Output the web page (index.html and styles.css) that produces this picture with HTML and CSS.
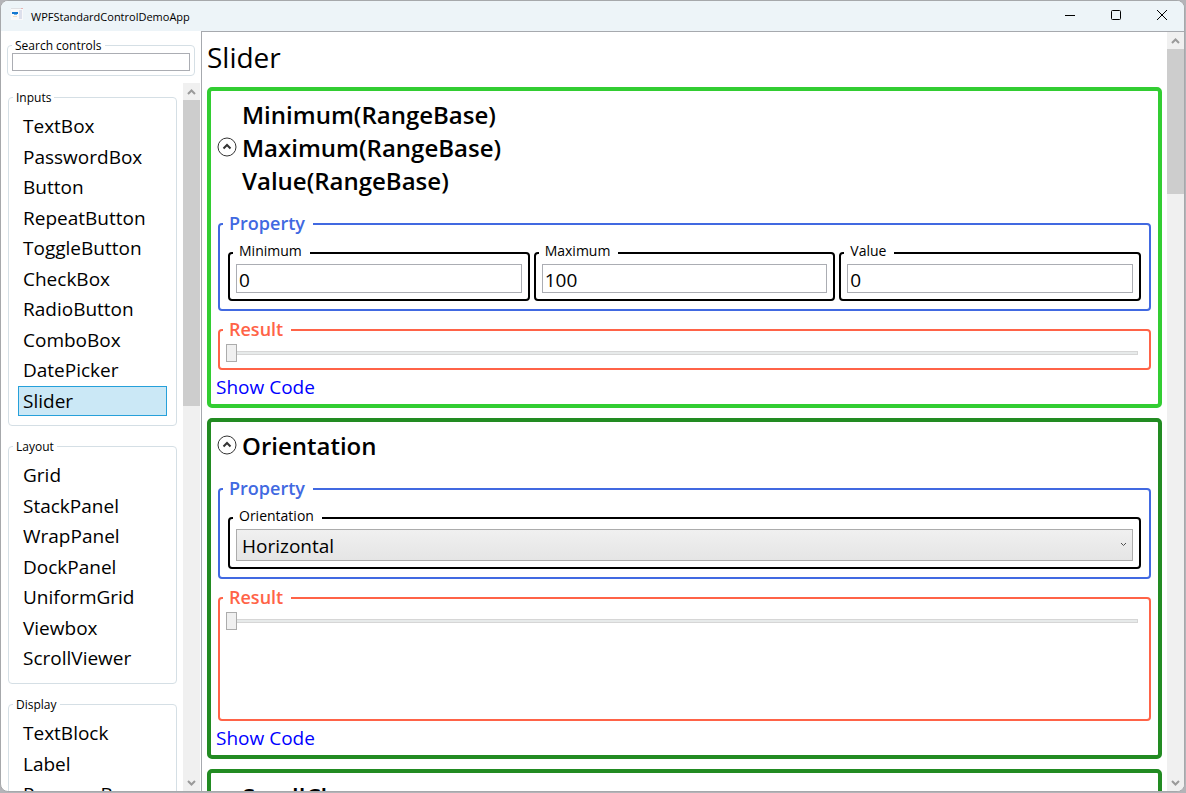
FILE: index.html
```html
<!DOCTYPE html>
<html lang="en">
  <head>
    <meta charset="utf-8">
    <title>WPFStandardControlDemoApp</title>
    <link rel="stylesheet" href="styles.css">
  </head>
  <body>
    <div class="window">
      <header class="titlebar">
        <svg class="app-icon" viewBox="0 0 16 16">
          <rect x="1" y="1" width="12" height="11" fill="#f9f9fa"/>
          <rect x="1" y="0" width="12" height="1" fill="#dfe0e3"/>
          <rect x="11" y="0" width="2" height="1" fill="#e8b4b4"/>
          <rect x="2" y="4" width="6" height="2" fill="#1478d0"/>
          <rect x="4" y="6" width="3" height="1" fill="#6fb0e6"/>
          <rect x="3" y="8" width="4" height="1" fill="#f3dfc4"/>
          <rect x="9" y="2" width="3" height="9" fill="#dde0ec"/>
        </svg>
        <span class="app-name">WPFStandardControlDemoApp</span>
        <div class="window-buttons">
          <button type="button" aria-label="Minimize"><svg viewBox="0 0 12 12"><path d="M1 6.5h10"/></svg></button>
          <button type="button" aria-label="Maximize"><svg viewBox="0 0 12 12"><rect x="1.5" y="1.5" width="9" height="9" rx="1"/></svg></button>
          <button type="button" aria-label="Close"><svg viewBox="0 0 12 12"><path d="M1 1l10 10M11 1L1 11"/></svg></button>
        </div>
      </header>

      <div class="content">
        <aside class="sidebar">
          <fieldset class="group search">
            <legend><label for="search">Search controls</label></legend>
            <input id="search" class="search-box" type="text">
          </fieldset>

          <div class="scroll-area">
            <nav class="menu">
              <fieldset class="group">
                <legend>Inputs</legend>
                <ul>
                  <li><a href="#">TextBox</a></li>
                  <li><a href="#">PasswordBox</a></li>
                  <li><a href="#">Button</a></li>
                  <li><a href="#">RepeatButton</a></li>
                  <li><a href="#">ToggleButton</a></li>
                  <li><a href="#">CheckBox</a></li>
                  <li><a href="#">RadioButton</a></li>
                  <li><a href="#">ComboBox</a></li>
                  <li><a href="#">DatePicker</a></li>
                  <li><a href="#" class="selected">Slider</a></li>
                </ul>
              </fieldset>
              <fieldset class="group">
                <legend>Layout</legend>
                <ul>
                  <li><a href="#">Grid</a></li>
                  <li><a href="#">StackPanel</a></li>
                  <li><a href="#">WrapPanel</a></li>
                  <li><a href="#">DockPanel</a></li>
                  <li><a href="#">UniformGrid</a></li>
                  <li><a href="#">Viewbox</a></li>
                  <li><a href="#">ScrollViewer</a></li>
                </ul>
              </fieldset>
              <fieldset class="group">
                <legend>Display</legend>
                <ul>
                  <li><a href="#">TextBlock</a></li>
                  <li><a href="#">Label</a></li>
                  <li><a href="#">ProgressBar</a></li>
                </ul>
              </fieldset>
            </nav>
            <div class="scrollbar">
              <button type="button" aria-label="Scroll up"><svg viewBox="0 0 9 6"><path d="M1 5l3.5-3.5L8 5"/></svg></button>
              <div class="track"><div class="thumb menu-thumb"></div></div>
              <button type="button" aria-label="Scroll down"><svg viewBox="0 0 9 6"><path d="M1 1l3.5 3.5L8 1"/></svg></button>
            </div>
          </div>
        </aside>

        <main class="page">
          <div class="page-body">
            <h1>Slider</h1>

            <section class="card current">
              <div class="card-header">
                <button type="button" class="expander" aria-label="Collapse"><svg viewBox="0 0 20 20"><circle cx="10" cy="10" r="9"/><path d="M6.5 11.5L10 8l3.5 3.5"/></svg></button>
                <h2>Minimum(RangeBase)<br>Maximum(RangeBase)<br>Value(RangeBase)</h2>
              </div>
              <fieldset class="box property">
                <legend>Property</legend>
                <div class="fields">
                  <fieldset class="box field">
                    <legend><label for="minimum">Minimum</label></legend>
                    <input id="minimum" type="text" value="0">
                  </fieldset>
                  <fieldset class="box field">
                    <legend><label for="maximum">Maximum</label></legend>
                    <input id="maximum" type="text" value="100">
                  </fieldset>
                  <fieldset class="box field">
                    <legend><label for="value">Value</label></legend>
                    <input id="value" type="text" value="0">
                  </fieldset>
                </div>
              </fieldset>
              <fieldset class="box result">
                <legend>Result</legend>
                <input type="range" min="0" max="100" value="0" aria-label="Range result">
              </fieldset>
              <a href="#" class="show-code">Show Code</a>
            </section>

            <section class="card">
              <div class="card-header">
                <button type="button" class="expander" aria-label="Collapse"><svg viewBox="0 0 20 20"><circle cx="10" cy="10" r="9"/><path d="M6.5 11.5L10 8l3.5 3.5"/></svg></button>
                <h2>Orientation</h2>
              </div>
              <fieldset class="box property">
                <legend>Property</legend>
                <fieldset class="box field">
                  <legend><label for="orientation">Orientation</label></legend>
                  <div class="combo">
                    <select id="orientation">
                      <option>Horizontal</option>
                      <option>Vertical</option>
                    </select>
                    <svg viewBox="0 0 7 5"><path d="M1 1l2.5 2.5L6 1"/></svg>
                  </div>
                </fieldset>
              </fieldset>
              <fieldset class="box result tall">
                <legend>Result</legend>
                <input type="range" min="0" max="100" value="0" aria-label="Orientation result">
              </fieldset>
              <a href="#" class="show-code">Show Code</a>
            </section>

            <section class="card">
              <div class="card-header">
                <button type="button" class="expander" aria-label="Collapse"><svg viewBox="0 0 20 20"><circle cx="10" cy="10" r="9"/><path d="M6.5 11.5L10 8l3.5 3.5"/></svg></button>
                <h2>SmallChange<br>LargeChange</h2>
              </div>
            </section>
          </div>
          <div class="scrollbar">
            <button type="button" aria-label="Scroll up"><svg viewBox="0 0 9 6"><path d="M1 5l3.5-3.5L8 5"/></svg></button>
            <div class="track"><div class="thumb page-thumb"></div></div>
            <button type="button" aria-label="Scroll down"><svg viewBox="0 0 9 6"><path d="M1 1l3.5 3.5L8 1"/></svg></button>
          </div>
        </main>
      </div>
    </div>
  </body>
</html>
```
FILE: styles.css
```css
*{
  box-sizing: border-box;
}
body{
  margin: 0;
  padding: 0 1px 1px 0;
  height: 100vh;
  overflow: hidden;
  background-color: #b4b4b8;
  font-family: "Open Sans", "Noto Sans", sans-serif;
  font-size: 11px;
  color: black;
}
button{
  padding: 0;
  border: none;
  background-color: transparent;
}
svg{
  display: block;
  fill: none;
  stroke: black;
}
fieldset{
  min-width: 0;
  margin: 0;
}
ul{
  margin: 0;
  padding: 0;
  list-style: none;
}

/* window */
.window{
  display: flex;
  flex-direction: column;
  height: 100%;
  border: 1px solid #a6a8ab;
  border-radius: 8px;
  overflow: hidden;
  background-color: white;
}
.titlebar{
  display: flex;
  align-items: center;
  flex: none;
  height: 30px;
  padding-left: 9px;
  background-color: #edf4f8;
}
.app-icon{
  width: 16px;
  height: 16px;
  margin-right: 5px;
  stroke: none;
}
.window-buttons{
  display: flex;
  align-self: flex-start;
  margin-left: auto;
  margin-right: -1px;
}
.window-buttons button{
  display: flex;
  align-items: center;
  justify-content: center;
  width: 46px;
  height: 28px;
}
.window-buttons svg{
  width: 12px;
  height: 12px;
}
.content{
  display: flex;
  flex: 1;
  min-height: 0;
}

/* sidebar */
.sidebar{
  display: flex;
  flex-direction: column;
  flex: none;
  width: 200px;
}
.group{
  border: 1px solid #d5dfe5;
  border-radius: 4px;
  padding: 6px 9px 9px 9px;
}
.group legend{
  margin-left: -5px;
  padding: 0 3px;
  font-size: 12px;
  line-height: 15px;
}
.search{
  margin: 7px 6px 7px 6px;
  padding: 0 4px 4px 4px;
}
.search legend{
  margin-left: 0;
}
.search-box{
  display: block;
  width: 100%;
  height: 18px;
  border: 1px solid #abadb3;
}
.scroll-area{
  display: flex;
  flex: 1;
  min-height: 0;
}
.menu{
  display: flex;
  flex-direction: column;
  flex: 1;
  gap: 13px;
  padding: 7px 6px 0 7px;
  overflow: hidden;
}
.menu a{
  display: block;
  height: 31px;
  padding: 0 4px;
  border: 1px solid transparent;
  color: black;
  font-size: 19px;
  line-height: 29px;
  text-decoration: none;
}
.menu li:nth-child(even) a{
  height: 30px;
}
.menu .selected{
  border-color: #26a0da;
  background-color: #cbe8f6;
}

/* scrollbars */
.scrollbar{
  display: flex;
  flex-direction: column;
  flex: none;
  width: 17px;
  background-color: #f0f0f0;
}
.scrollbar button{
  display: flex;
  align-items: center;
  justify-content: center;
  height: 17px;
}
.scrollbar svg{
  width: 9px;
  height: 6px;
  stroke: #9a9a9a;
  stroke-width: 2px;
}
.track{
  flex: 1;
}
.thumb{
  background-color: #cdcdcd;
}
.menu-thumb{
  height: 45.4%;
}
.page-thumb{
  height: 20%;
}
.sidebar .scrollbar{
  margin-right: 1px;
}

/* page */
.page{
  display: flex;
  flex: 1;
  min-width: 0;
  border-top: 1px solid #a6a9ae;
  border-left: 1px solid #a6a9ae;
}
.page-body{
  display: flex;
  flex-direction: column;
  flex: 1;
  gap: 10px;
  min-width: 0;
  padding: 5px;
  overflow: hidden;
}
h1{
  flex: none;
  margin: 0;
  font-size: 28px;
  font-weight: 400;
  line-height: 40px;
}
.card{
  flex: none;
  padding: 7px;
  border: 4px solid #228b22;
  border-radius: 5px;
}
.current{
  border-color: #32cd32;
}
.card-header{
  display: flex;
  align-items: center;
  gap: 5px;
  margin: 0 0 14px -1px;
}
.expander{
  padding-bottom: 2px;
}
.expander svg{
  width: 20px;
  height: 20px;
  stroke: #333333;
}
.expander path{
  stroke-width: 2px;
}
h2{
  margin: 0;
  font-size: 24px;
  font-weight: 600;
  line-height: 33px;
}
.box{
  border: 2px solid black;
  border-radius: 4px;
  padding: 1px 6px 6px 6px;
}
.box legend{
  margin-left: -3px;
  padding: 0 8px 4px 6px;
  font-size: 14px;
  line-height: 16px;
}
.box.property{
  margin-bottom: 6px;
  padding: 6px 8px 8px 8px;
  border-color: #4169e1;
}
.box.result{
  border-color: #ff6347;
}
.property > legend,
.result > legend{
  padding: 0 8px 2px 6px;
  font-size: 18px;
  font-weight: 600;
  line-height: 24px;
}
.box.property > legend{
  margin-left: -5px;
  padding-bottom: 2px;
  color: #4169e1;
  font-size: 18px;
  line-height: 24px;
}
.box.result > legend{
  padding-bottom: 2px;
  color: #ff6347;
  font-size: 18px;
  line-height: 24px;
}
.fields{
  display: grid;
  grid-template-columns: 1fr 1fr 1fr;
  gap: 4px;
}
.field input{
  display: block;
  width: 100%;
  height: 29px;
  padding: 2px 2px 0 2px;
  border: 1px solid #abadb3;
  font-family: inherit;
  font-size: 19px;
}
.combo{
  position: relative;
}
.combo select{
  display: block;
  width: 100%;
  height: 32px;
  padding: 2px 5px 0 5px;
  appearance: none;
  border: 1px solid #acacac;
  border-radius: 0;
  background: linear-gradient(#f0f0f0, #e5e5e5);
  color: black;
  font-family: inherit;
  font-size: 19px;
}
.combo svg{
  position: absolute;
  top: 13px;
  right: 6px;
  width: 7px;
  height: 5px;
  stroke: #505050;
}
input[type=range]{
  display: block;
  width: 100%;
  height: 18px;
  margin: 0;
  appearance: none;
  background: linear-gradient(#e7eaea, #e7eaea) center / calc(100% - 12px) 2px no-repeat,
    linear-gradient(#d6d6d6, #d6d6d6) center / calc(100% - 10px) 4px no-repeat;
}
input[type=range]::-webkit-slider-thumb{
  appearance: none;
  width: 11px;
  height: 18px;
  border: 1px solid #acacac;
  background-color: #f0f0f0;
}
.tall{
  min-height: 136px;
}
.show-code{
  display: block;
  width: max-content;
  margin: 4px 0 -3px -2px;
  color: blue;
  font-size: 19px;
  line-height: 26px;
  text-decoration: none;
}
```
